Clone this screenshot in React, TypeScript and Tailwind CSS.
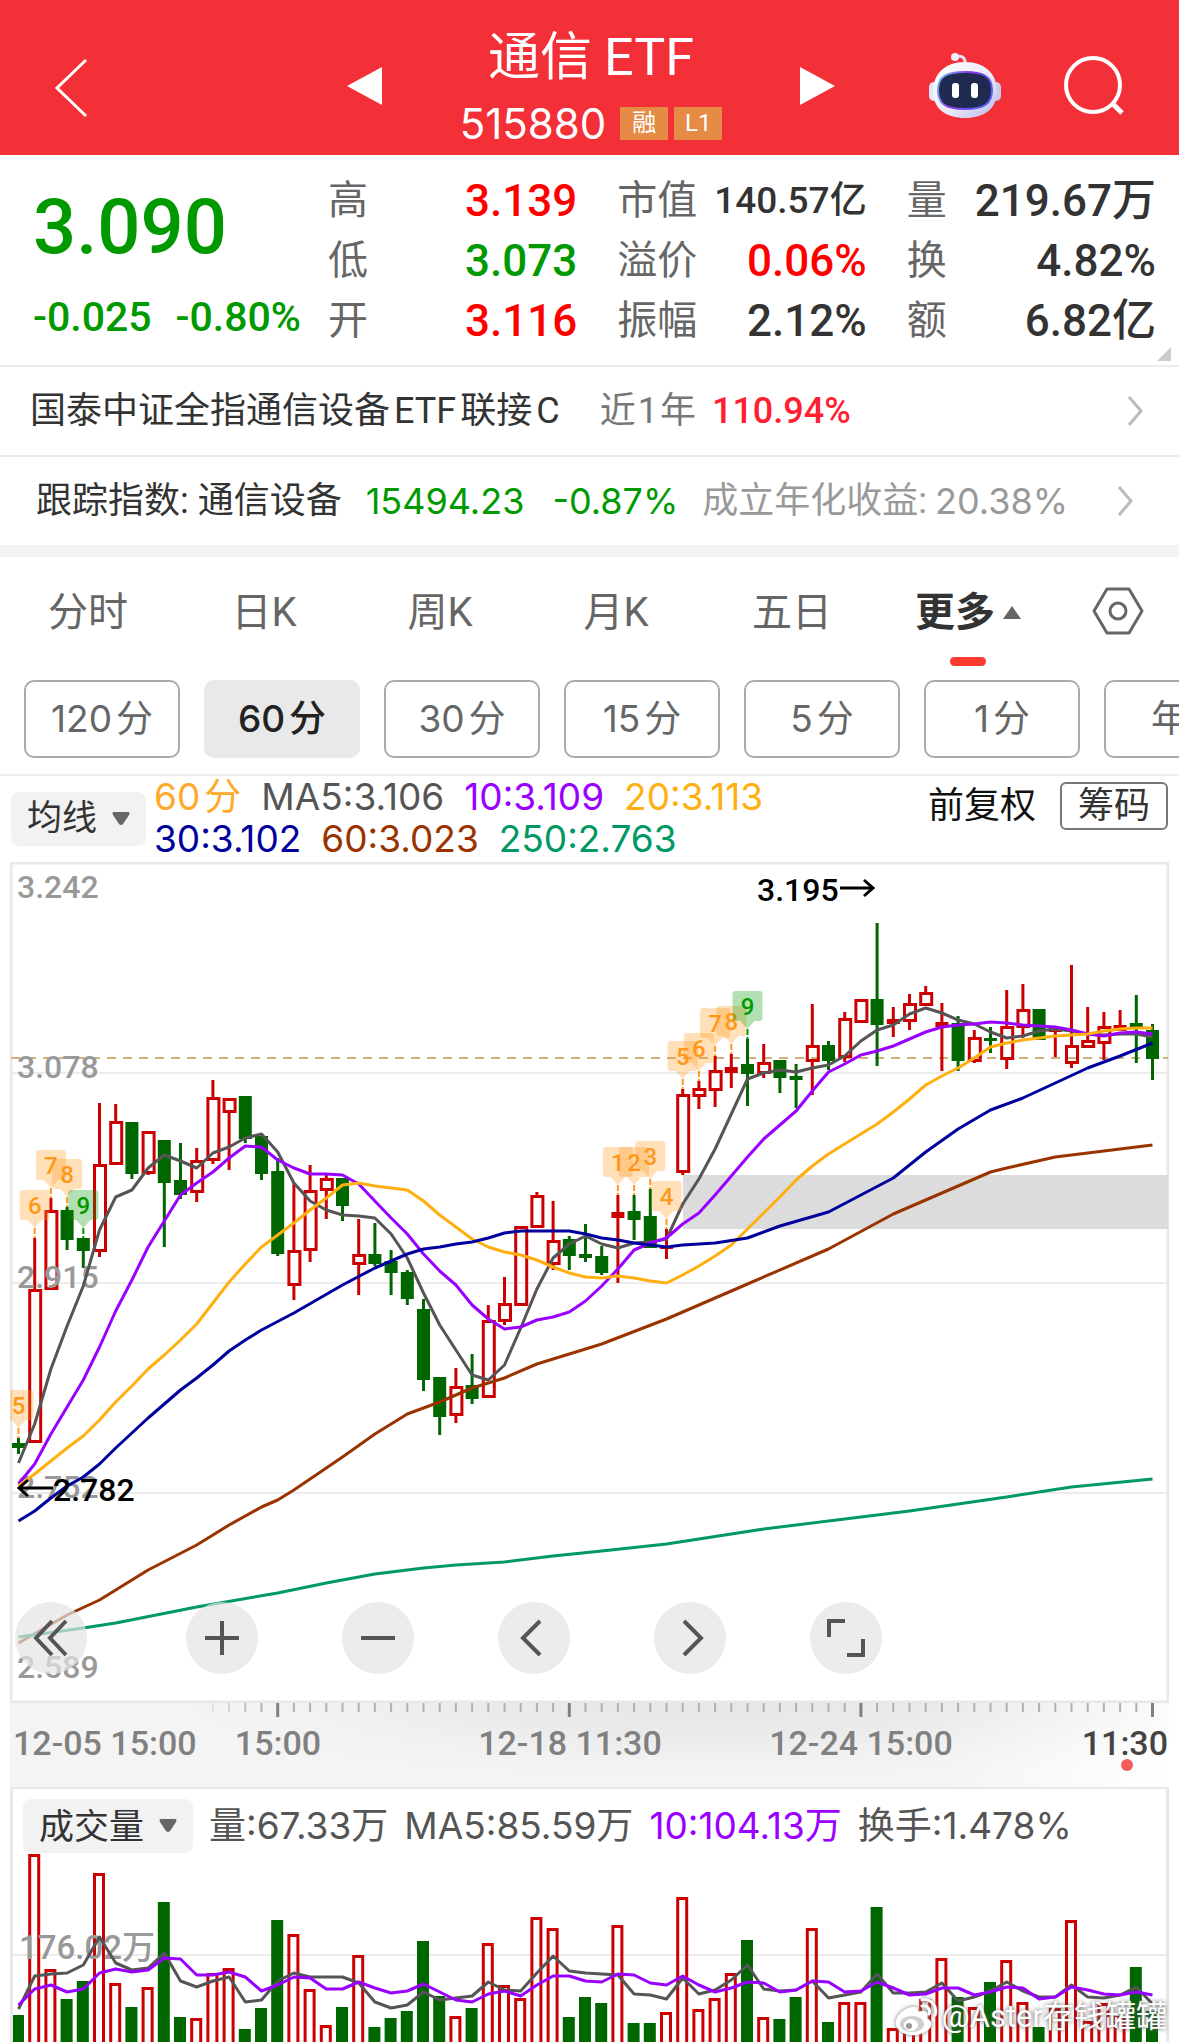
import { useState } from 'react';

type Candle = ['u' | 'd', number, number, number, number];
type Point = [number, number];

const STEP = 16.2;
const xAt = (i: number) => 18.5 + i * STEP;

// direction, high, body top, body bottom, low
const candles: Candle[] = [
  ['d', 1437, 1442, 1447, 1453], ['u', 1237, 1288, 1442, 1442], ['u', 1197, 1209, 1289, 1289],
  ['d', 1206, 1209, 1239, 1249], ['d', 1237, 1237, 1250, 1267], ['u', 1102, 1163, 1251, 1256],
  ['u', 1103, 1120, 1164, 1164], ['d', 1121, 1121, 1173, 1178], ['u', 1130, 1130, 1173, 1174],
  ['d', 1139, 1139, 1182, 1246], ['d', 1142, 1179, 1194, 1198], ['u', 1147, 1159, 1192, 1201],
  ['u', 1079, 1096, 1160, 1163], ['u', 1097, 1097, 1112, 1169], ['d', 1095, 1095, 1138, 1142],
  ['d', 1135, 1135, 1173, 1179], ['d', 1157, 1170, 1253, 1255], ['u', 1182, 1249, 1285, 1299],
  ['u', 1164, 1189, 1250, 1261], ['u', 1174, 1177, 1190, 1218], ['d', 1177, 1177, 1205, 1220],
  ['u', 1218, 1253, 1264, 1294], ['d', 1222, 1253, 1263, 1265], ['d', 1249, 1260, 1272, 1294],
  ['d', 1269, 1271, 1298, 1304], ['d', 1298, 1308, 1379, 1390], ['d', 1376, 1376, 1416, 1434],
  ['u', 1367, 1385, 1415, 1422], ['d', 1353, 1384, 1398, 1403], ['u', 1304, 1319, 1397, 1397],
  ['u', 1276, 1302, 1321, 1324], ['u', 1225, 1225, 1305, 1305], ['u', 1191, 1194, 1227, 1227],
  ['u', 1200, 1239, 1264, 1269], ['d', 1235, 1238, 1255, 1269], ['d', 1223, 1253, 1257, 1261],
  ['d', 1245, 1255, 1272, 1274], ['u', 1194, 1211, 1217, 1282], ['d', 1194, 1210, 1219, 1239],
  ['d', 1188, 1215, 1247, 1247], ['u', 1228, 1246, 1248, 1258], ['u', 1088, 1093, 1172, 1174],
  ['u', 1080, 1087, 1096, 1108], ['u', 1055, 1069, 1090, 1106], ['u', 1053, 1066, 1072, 1087],
  ['d', 1038, 1063, 1073, 1105], ['u', 1043, 1061, 1073, 1077], ['d', 1059, 1059, 1077, 1092],
  ['d', 1063, 1075, 1079, 1107], ['u', 1003, 1044, 1061, 1094], ['d', 1040, 1044, 1060, 1069],
  ['u', 1011, 1017, 1057, 1061], ['u', 998, 998, 1022, 1022], ['d', 922, 998, 1024, 1065],
  ['u', 1006, 1018, 1023, 1036], ['u', 993, 1002, 1021, 1029], ['u', 985, 991, 1005, 1005],
  ['u', 1002, 1021, 1026, 1070], ['d', 1015, 1022, 1060, 1070], ['u', 1029, 1036, 1061, 1062],
  ['d', 1026, 1037, 1040, 1052], ['u', 989, 1025, 1059, 1068], ['u', 983, 1008, 1027, 1037],
  ['d', 1008, 1008, 1039, 1039], ['u', 1025, 1027, 1031, 1056], ['u', 964, 1044, 1063, 1067],
  ['u', 1006, 1039, 1047, 1047], ['u', 1011, 1025, 1043, 1059], ['u', 1009, 1024, 1030, 1030],
  ['d', 994, 1022, 1027, 1062], ['d', 1023, 1029, 1058, 1079],
];

const ma5 = [
  1462, 1423, 1368, 1325, 1285, 1229, 1196, 1189, 1167, 1154, 1160, 1167, 1152, 1146, 1137, 1133, 1151, 1182,
  1200, 1209, 1214, 1215, 1217, 1233, 1257, 1292, 1324, 1349, 1374, 1379, 1364, 1327, 1288, 1257, 1243, 1235,
  1243, 1247, 1242, 1241, 1238, 1203, 1178, 1148, 1113, 1078, 1072, 1069, 1071, 1067, 1064, 1055, 1040, 1029,
  1024, 1013, 1007, 1012, 1019, 1023, 1031, 1037, 1035, 1030, 1028, 1030, 1033, 1034, 1033, 1033, 1036,
];
const ma10 = [
  1483, 1463, 1433, 1406, 1379, 1346, 1310, 1279, 1246, 1220, 1194, 1182, 1171, 1157, 1145, 1146, 1159, 1167,
  1173, 1173, 1174, 1183, 1200, 1217, 1233, 1253, 1270, 1284, 1304, 1318, 1328, 1326, 1319, 1316, 1311, 1300,
  1285, 1268, 1249, 1242, 1237, 1223, 1212, 1194, 1175, 1156, 1138, 1124, 1110, 1090, 1071, 1063, 1054, 1050,
  1045, 1038, 1031, 1026, 1024, 1023, 1021, 1022, 1024, 1025, 1026, 1029, 1033, 1035, 1032, 1031, 1033,
];
const ma20 = [
  1485, 1473, 1460, 1447, 1435, 1419, 1401, 1385, 1368, 1354, 1339, 1323, 1302, 1281, 1263, 1246, 1234, 1222,
  1209, 1197, 1184, 1182, 1185, 1187, 1189, 1200, 1214, 1226, 1238, 1246, 1251, 1254, 1259, 1266, 1272, 1276,
  1277, 1275, 1277, 1280, 1282, 1274, 1265, 1255, 1244, 1228, 1212, 1196, 1179, 1165, 1153, 1143, 1133, 1123,
  1111, 1098, 1084, 1075, 1067, 1057, 1046, 1042, 1039, 1037, 1035, 1034, 1033, 1030, 1028, 1027, 1027,
];
// slower averages are kept as [bar index, y]
const ma30: Point[] = [
  [0, 1520], [1, 1510], [2, 1497], [3, 1485], [4, 1476], [5, 1463], [6, 1447], [7, 1432], [8, 1417], [9, 1403],
  [10, 1389], [11, 1377], [12, 1364], [13, 1350], [14, 1339], [15, 1329], [17, 1312], [20, 1284], [22, 1267],
  [24, 1253], [25, 1248], [26, 1246], [27, 1243], [28, 1241], [29, 1237], [30, 1232], [31, 1230], [34, 1230],
  [35, 1233], [36, 1237], [37, 1239], [38, 1242], [39, 1244], [40, 1246], [41, 1244], [43, 1242], [45, 1237],
  [47, 1225], [50, 1211], [52, 1194], [54, 1177], [55, 1164], [56, 1151], [58, 1128], [60, 1109], [62, 1097],
  [64, 1082], [66, 1067], [68, 1055], [70, 1042],
];
const ma60: Point[] = [
  [0, 1642], [3, 1614], [5, 1599], [8, 1569], [11, 1544], [13, 1524], [15, 1506], [16, 1499], [17, 1489],
  [20, 1456], [22, 1433], [24, 1413], [26, 1401], [28, 1387], [30, 1377], [32, 1363], [34, 1353], [36, 1343],
  [40, 1318], [45, 1283], [50, 1248], [54, 1213], [57, 1192], [60, 1171], [61, 1167], [64, 1156], [66, 1152],
  [70, 1144],
];
const ma250: Point[] = [
  [0, 1636], [4, 1627], [6, 1622], [11, 1606], [16, 1592], [19, 1582], [22, 1573], [25, 1567], [27, 1564],
  [30, 1561], [33, 1555], [36, 1550], [40, 1543], [46, 1528], [55, 1510], [61, 1496], [65, 1486], [70, 1478],
];

const volumeTops = [
  2014, 1853, 1968, 1998, 1980, 1872, 1982, 2006, 1986, 1901, 2016, 2017, 1972, 1967, 2028, 2007, 1919, 1933,
  1988, 2024, 2006, 1954, 2026, 2017, 2010, 1940, 1995, 2015, 2007, 1942, 1984, 1997, 1916, 1927, 2016, 1996,
  2002, 1924, 2022, 2022, 2011, 1896, 2008, 1997, 1972, 1939, 2016, 2018, 1996, 1927, 2021, 2001, 2001, 1906,
  2027, 2020, 1998, 1957, 1996, 2006, 1981, 1959, 2001, 2026, 2007, 1919, 2020, 2002, 2015, 1966, 2010,
];
const volumeMa5 = [
  2008, 1975, 1973, 1972, 1964, 1936, 1962, 1969, 1967, 1952, 1980, 1986, 1980, 1976, 2001, 1999, 1980, 1972,
  1976, 1976, 1976, 1982, 2001, 2007, 2004, 1991, 1999, 1997, 1995, 1981, 1989, 1990, 1972, 1955, 1970, 1972,
  1973, 1974, 1993, 1994, 1998, 1977, 1993, 1989, 1979, 1964, 1988, 1990, 1989, 1980, 1997, 1994, 1991, 1973,
  1992, 1992, 1991, 1982, 2000, 1996, 1990, 1981, 1990, 1996, 1996, 1984, 1996, 1997, 1994, 1986, 2003,
];
const volumeMa10 = [
  2004, 1988, 1984, 1991, 1988, 1972, 1968, 1971, 1969, 1957, 1958, 1974, 1974, 1971, 1976, 1990, 1984, 1976,
  1977, 1988, 1988, 1981, 1987, 1992, 1990, 1983, 1991, 1999, 2001, 1993, 1990, 1995, 1984, 1975, 1975, 1980,
  1981, 1973, 1974, 1982, 1984, 1975, 1984, 1991, 1987, 1981, 1982, 1991, 1989, 1980, 1981, 1991, 1990, 1981,
  1987, 1994, 1993, 1987, 1987, 1994, 1991, 1986, 1987, 1998, 1996, 1986, 1989, 1993, 1994, 1991, 1994,
];

// nine-turn counters: [bar index, count]
const markers: Point[] = [
  [0, 5], [1, 6], [2, 7], [3, 8], [4, 9],
  [37, 1], [38, 2], [39, 3], [40, 4], [41, 5], [42, 6], [43, 7], [44, 8], [45, 9],
];

const quotes = [
  [
    { label: '高', value: '3.139', tone: 'text-[44px] text-[#ff0000]' },
    { label: '低', value: '3.073', tone: 'text-[44px] text-[#009900]' },
    { label: '开', value: '3.116', tone: 'text-[44px] text-[#ff0000]' },
  ],
  [
    { label: '市值', value: '140.57亿', tone: 'text-[37px] text-[#333333]' },
    { label: '溢价', value: '0.06%', tone: 'text-[44px] text-[#ff0000]' },
    { label: '振幅', value: '2.12%', tone: 'text-[44px] text-[#333333]' },
  ],
  [
    { label: '量', value: '219.67万', tone: 'text-[44px] text-[#333333]' },
    { label: '换', value: '4.82%', tone: 'text-[44px] text-[#333333]' },
    { label: '额', value: '6.82亿', tone: 'text-[44px] text-[#333333]' },
  ],
];

const tabs = ['分时', '日K', '周K', '月K', '五日'];
const periods = ['120分', '60分', '30分', '15分', '5分', '1分', '年K'];

const line = (ys: number[]) => ys.map((y, i) => `${xAt(i)},${y}`).join(' ');
const sparse = (pts: Point[]) => pts.map(([i, y]) => `${xAt(i)},${y}`).join(' ');

const Chevron = () => (
  <svg viewBox="0 0 16 32" className="ml-auto h-8 w-4" fill="none" stroke="#bbbbbb" strokeWidth="3">
    <path d="M2 2 L14 16 L2 30" />
  </svg>
);

const Header = () => (
  <header className="grid h-[155px] grid-cols-[347fr_488px_344fr] items-center bg-[#f33038] text-white">
    <button aria-label="返回" className="ml-[54px] mt-5 w-9">
      <svg viewBox="0 0 36 60" fill="none" stroke="#fff" strokeWidth="3">
        <path d="M32 2 L3 30 L32 58" />
      </svg>
    </button>
    <div className="flex items-center justify-between">
      <button aria-label="上一只" className="mt-4">
        <svg width="35" height="38" viewBox="0 0 35 38" fill="#fff">
          <path d="M35 0 V38 L0 19 Z" />
        </svg>
      </button>
      <div className="flex flex-col items-center pt-5">
        <h1 className="flex gap-3 text-[52px] leading-[72px]">
          <span>通信</span>
          <span>ETF</span>
        </h1>
        <div className="flex items-center gap-[6px]">
          <span className="mr-2 font-[Inter,sans-serif] text-[42px] leading-[60px]">515880</span>
          <span className="h-[33px] w-12 bg-[#e58b46] text-center text-[24px] leading-[33px]">融</span>
          <span className="h-[33px] w-12 bg-[#e58b46] text-center text-[24px] leading-[33px]">L1</span>
        </div>
      </div>
      <button aria-label="下一只" className="mt-4">
        <svg width="35" height="38" viewBox="0 0 35 38" fill="#fff">
          <path d="M0 0 V38 L35 19 Z" />
        </svg>
      </button>
    </div>
    <div className="flex items-center justify-end gap-[62px] pr-[55px] pt-4">
      <button aria-label="智能助手">
        <svg width="74" height="68" viewBox="0 0 74 68">
          <defs>
            <linearGradient id="shell" x1="0" y1="0" x2="1" y2="1">
              <stop offset="0" stopColor="#ffffff" />
              <stop offset="0.55" stopColor="#eceafa" />
              <stop offset="1" stopColor="#b9b8e6" />
            </linearGradient>
            <linearGradient id="rim" x1="0" y1="0" x2="1" y2="0.4">
              <stop offset="0" stopColor="#5fd0f5" />
              <stop offset="0.5" stopColor="#8a35e8" />
              <stop offset="1" stopColor="#5a5df0" />
            </linearGradient>
          </defs>
          <path d="M37 13 C38 5 33 3 28 5" fill="none" stroke="#dedcf5" strokeWidth="3" />
          <circle cx="27" cy="5" r="4" fill="#f1effc" />
          <rect x="1" y="30" width="10" height="19" rx="5" fill="#e6e4f8" />
          <rect x="63" y="30" width="10" height="19" rx="5" fill="#c9c8ee" />
          <path d="M37 10 C58 10 69 23 69 39 C69 57 56 66 37 66 C18 66 5 57 5 39 C5 23 16 10 37 10 Z" fill="url(#shell)" />
          <path d="M37 20 C55 20 64 24 64 38 C64 52 56 57 37 57 C18 57 10 52 10 38 C10 24 19 20 37 20 Z" fill="#1f2a50" stroke="url(#rim)" strokeWidth="2" />
          <rect x="24" y="31" width="7" height="15" rx="3" fill="#fff" />
          <rect x="43" y="31" width="7" height="15" rx="3" fill="#fff" />
        </svg>
      </button>
      <button aria-label="搜索">
        <svg width="60" height="60" viewBox="0 0 60 60" fill="none" stroke="#fff" strokeWidth="4">
          <circle cx="29" cy="29" r="27" />
          <path d="M48 47 L58 57" strokeWidth="5" />
        </svg>
      </button>
    </div>
  </header>
);

const Quote = () => (
  <section className="relative flex border-b-2 border-[#ececec] pl-[33px] pr-[23px] pt-4 pb-[14px]">
    <div className="w-[295px] shrink-0 font-medium text-[#009900]">
      <div className="pt-3 text-[76px] leading-[88px]">3.090</div>
      <div className="flex gap-6 pt-4 text-[41px] leading-[60px]">
        <span>-0.025</span>
        <span>-0.80%</span>
      </div>
    </div>
    <div className="grid flex-1 grid-cols-3 gap-10">
      {quotes.map((column) => (
        <dl key={column[0].label}>
          {column.map(({ label, value, tone }) => (
            <div key={label} className="flex h-[60px] items-center justify-between">
              <dt className="text-[40px] text-[#666666]">{label}</dt>
              <dd className={`font-medium ${tone}`}>{value}</dd>
            </div>
          ))}
        </dl>
      ))}
    </div>
    <svg className="absolute right-2 bottom-1 size-[14px]" viewBox="0 0 14 14" fill="#cccccc">
      <path d="M14 0 V14 H0 Z" />
    </svg>
  </section>
);

const Links = () => (
  <>
    <a href="#fund" className="flex h-[90px] items-center border-b-2 border-[#ececec] pl-[30px] pr-9 text-[36px] text-[#333333]">
      <span className="flex gap-1">
        <span>国泰中证全指通信设备</span>
        <span>ETF</span>
        <span>联接</span>
        <span>C</span>
      </span>
      <span className="ml-10 flex gap-[2px] text-[#777777]">
        <span>近</span>
        <span>1</span>
        <span>年</span>
      </span>
      <span className="ml-4 font-medium text-[#ff1e32]">110.94%</span>
      <Chevron />
    </a>
    <a href="#index" className="flex h-[88px] items-center pl-9 pr-[46px] text-[36px] text-[#333333]">
      <span>跟踪指数: 通信设备</span>
      <span className="ml-6 font-[Inter,sans-serif] text-[#009900]">15494.23</span>
      <span className="ml-7 font-[Inter,sans-serif] text-[#009900]">-0.87%</span>
      <span className="ml-6 text-[#999999]">成立年化收益:</span>
      <span className="ml-2 font-[Inter,sans-serif] text-[#999999]">20.38%</span>
      <Chevron />
    </a>
    <div className="h-3 bg-[#f4f4f4]" />
  </>
);

const PeriodTabs = () => {
  const [period, setPeriod] = useState('60分');

  return (
    <nav className="overflow-hidden border-b-2 border-[#ececec]">
      <div className="grid h-[123px] grid-cols-[repeat(6,176fr)_123fr] text-[40px] text-[#666666]">
        {tabs.map((tab) => (
          <button key={tab} className="pb-3">
            {tab}
          </button>
        ))}
        <button className="relative flex items-center justify-center gap-2 pb-3 font-bold text-[#333333]">
          更多
          <svg width="18" height="13" viewBox="0 0 18 13" fill="#666666">
            <path d="M9 0 L18 13 H0 Z" />
          </svg>
          <span className="absolute bottom-[14px] left-1/2 h-[9px] w-9 -translate-x-1/2 rounded-full bg-[#fd3a30]" />
        </button>
        <button aria-label="设置" className="flex items-center justify-center pb-4">
          <svg width="52" height="48" viewBox="0 0 52 48" fill="none" stroke="#666666" strokeWidth="3">
            <path d="M15 2 H37 L50 24 L37 46 H15 L2 24 Z" strokeLinejoin="round" />
            <circle cx="26" cy="24" r="8" />
          </svg>
        </button>
      </div>
      <div className="flex gap-6 pb-4 pl-6">
        {periods.map((p) => (
          <button
            key={p}
            onClick={() => setPeriod(p)}
            className={`flex h-[78px] w-[156px] shrink-0 items-center justify-center gap-1 rounded-[10px] border-2 font-[Inter,'Noto_Sans_CJK_SC',sans-serif] text-[37px] ${
              p === period
                ? 'border-[#e9e9e9] bg-[#e9e9e9] font-medium text-[#222222]'
                : 'border-[#aaaaaa] text-[#666666]'
            }`}
          >
            {p.endsWith('分') ? (
              <>
                <span>{p.slice(0, -1)}</span>
                <span>分</span>
              </>
            ) : (
              p
            )}
          </button>
        ))}
      </div>
    </nav>
  );
};

const Picker = ({ label, options }: { label: string; options: string[] }) => (
  <label className="flex h-[54px] shrink-0 items-center gap-[14px] rounded-lg bg-[#f2f2f2] px-4">
    <select aria-label={label} className="appearance-none bg-transparent text-[35px] leading-[54px] text-[#333333] outline-none">
      {options.map((o) => (
        <option key={o}>{o}</option>
      ))}
    </select>
    <svg width="18" height="14" viewBox="0 0 18 14" fill="#666666">
      <path d="M1 0 H17 Q18 1 17 3 L11 12 Q9 14 7 12 L1 3 Q0 1 1 0 Z" />
    </svg>
  </label>
);

const Indicators = () => (
  <div className="flex h-[86px] items-start px-[11px]">
    <div className="pt-4">
      <Picker label="指标" options={['均线']} />
    </div>
    <div className="ml-2 flex-1 font-[Inter,'Noto_Sans_CJK_SC',sans-serif] text-[37px] leading-[42px]">
      <div className="flex gap-5">
        <span className="flex gap-1 text-[#ffa92b]">
          <span>60</span>
          <span>分</span>
        </span>
        <span className="text-[#555555]">MA5:3.106</span>
        <span className="text-[#9a00ff]">10:3.109</span>
        <span className="text-[#ffb010]">20:3.113</span>
      </div>
      <div className="flex gap-5">
        <span className="text-[#00009c]">30:3.102</span>
        <span className="text-[#993300]">60:3.023</span>
        <span className="text-[#009966]">250:2.763</span>
      </div>
    </div>
    <button className="mt-[6px] text-[36px] leading-[48px] text-[#111111]">前复权</button>
    <button className="ml-6 mt-[6px] h-12 w-[108px] rounded-md border-2 border-[#777777] text-[36px] leading-[42px] text-[#333333]">
      筹码
    </button>
  </div>
);

const CandleShape = ({ candle, x }: { candle: Candle; x: number }) => {
  const [dir, high, top, bottom, low] = candle;
  const color = dir === 'u' ? '#cc0000' : '#006600';
  const hollow = dir === 'u' && bottom - top > 7;

  return (
    <g stroke={color} strokeWidth="3">
      <path d={`M${x} ${high} V${top} M${x} ${bottom} V${low}`} />
      {hollow ? (
        <rect x={x - 5} y={top + 1.5} width="11" height={bottom - top - 3} fill="none" />
      ) : (
        <rect x={x - 6.5} y={top} width="13" height={bottom - top} fill={color} stroke="none" />
      )}
    </g>
  );
};

const Marker = ({ index, count }: { index: number; count: number }) => {
  const x = xAt(index);
  const high = candles[index][1];
  const top = high - 48;
  const color = count === 9 ? '#009900' : '#ff9818';

  return (
    <g>
      <path
        d={`M${x - 12} ${top} H${x + 12} Q${x + 15} ${top} ${x + 15} ${top + 3} V${top + 27} Q${x + 15} ${top + 30} ${x + 12} ${top + 30} H${x + 7} L${x} ${top + 38} L${x - 7} ${top + 30} H${x - 12} Q${x - 15} ${top + 30} ${x - 15} ${top + 27} V${top + 3} Q${x - 15} ${top} ${x - 12} ${top} Z`}
        fill={color}
        fillOpacity="0.3"
      />
      <path d={`M${x} ${top + 38} V${high}`} stroke={color} strokeWidth="2" strokeDasharray="6 2" />
      <text x={x} y={top + 24} textAnchor="middle" fontSize="24" fontWeight="500" fill={color}>
        {count}
      </text>
    </g>
  );
};

const tools = [
  { name: '展开', d: 'M20 2 L4 19 L20 36 M34 2 L18 19 L34 36' },
  { name: '放大', d: 'M2 19 H36 M19 2 V36' },
  { name: '缩小', d: 'M2 19 H36' },
  { name: '左移', d: 'M25 2 L8 19 L25 36' },
  { name: '右移', d: 'M13 2 L30 19 L13 36' },
  { name: '全屏', d: 'M2 18 V2 H18 M36 20 V36 H20' },
];

const PriceChart = () => (
  <div className="relative mx-[10px]">
    <svg viewBox="10 861 1159 841" className="block w-full" fill="none">
      <rect x="11" y="862" width="1157" height="839" stroke="#e8e8e8" strokeWidth="3" />
      <path d="M12 1072 H1167 M12 1282 H1167 M12 1492 H1167" stroke="#ececec" strokeWidth="2" />
      <rect x="683" y="1174" width="485" height="54" fill="#dcdcdc" />
      <path d="M11 1057 H1168" stroke="#d2b27c" strokeWidth="2" strokeDasharray="9 7" />
      {candles.map((c, i) => (
        <CandleShape key={i} candle={c} x={xAt(i)} />
      ))}
      <g fill="#999999" fontSize="32" fontWeight="500">
        <text x="17" y="897">3.242</text>
        <text x="17" y="1077">3.078</text>
        <text x="17" y="1287">2.915</text>
        <text x="17" y="1497">2.752</text>
        <text x="17" y="1677">2.589</text>
      </g>
      <g strokeWidth="3" strokeLinejoin="round">
        <polyline points={line(ma5)} stroke="#555555" />
        <polyline points={line(ma10)} stroke="#9a00ff" />
        <polyline points={line(ma20)} stroke="#ffb010" />
        <polyline points={sparse(ma30)} stroke="#00009c" />
        <polyline points={sparse(ma60)} stroke="#993300" />
        <polyline points={sparse(ma250)} stroke="#009966" />
      </g>
      {markers.map(([index, count]) => (
        <Marker key={index} index={index} count={count} />
      ))}
      <g fill="#000000" fontSize="32" fontWeight="500">
        <text x="757" y="900">3.195</text>
        <text x="53" y="1500">2.782</text>
      </g>
      <g stroke="#000000" strokeWidth="3">
        <path d="M840 887 H872 M864 879 L873 887 L864 895" />
        <path d="M20 1487 H53 M28 1479 L19 1487 L28 1495" />
      </g>
    </svg>
    <div className="absolute bottom-[29px] left-[5px] flex gap-[84px]">
      {tools.map(({ name, d }, i) => (
        <button
          key={name}
          aria-label={name}
          className={`flex size-[72px] items-center justify-center rounded-full bg-[#e4e4e4]/70 ${i === 0 ? 'mr-[15px]' : ''}`}
        >
          <svg width="38" height="38" viewBox="0 0 38 38" fill="none" stroke="#555555" strokeWidth="4">
            <path d={d} />
          </svg>
        </button>
      ))}
    </div>
  </div>
);

const TimeAxis = () => (
  <div className="mx-[10px]">
    <svg viewBox="10 1702 1159 84" className="block w-full" fontSize="34" fontWeight="500" fill="#808080">
      <defs>
        <linearGradient id="fade" x1="0" x2="1">
          <stop offset="0.8" stopColor="#f4f4f4" />
          <stop offset="1" stopColor="#ffffff" />
        </linearGradient>
        <radialGradient id="shade" cx="0.6" cy="0" r="0.5" gradientTransform="scale(1 2)">
          <stop offset="0" stopColor="#e6e6e6" />
          <stop offset="0.4" stopColor="#e8e8e8" stopOpacity="0.8" />
          <stop offset="1" stopColor="#f4f4f4" stopOpacity="0" />
        </radialGradient>
      </defs>
      <rect x="10" y="1702" width="1159" height="84" fill="url(#fade)" />
      <rect x="10" y="1702" width="1159" height="84" fill="url(#shade)" />
      {Array.from({ length: 59 }, (_, n) => {
        const i = n + 12;
        const major = (70 - i) % 18 === 0;
        return (
          <path
            key={i}
            d={`M${xAt(i)} 1702 V${major ? 1716 : 1711}`}
            stroke={major ? '#808080' : '#b0b0b0'}
            strokeWidth={major ? 3 : 2}
            opacity={Math.min(1, (n + 1) / 4)}
          />
        );
      })}
      <text x="13" y="1754">12-05 15:00</text>
      <text x="278" y="1754" textAnchor="middle">15:00</text>
      <text x="570" y="1754" textAnchor="middle">12-18 11:30</text>
      <text x="861" y="1754" textAnchor="middle">12-24 15:00</text>
      <text x="1168" y="1754" textAnchor="end" fill="#444444">11:30</text>
      <circle cx="1127" cy="1764" r="6" fill="#f45c5c" />
    </svg>
  </div>
);

const VolumeChart = () => (
  <section className="mx-[10px] border-x-3 border-t-2 border-[#e8e8e8]">
    <div className="flex h-16 items-end gap-4 pl-[10px] font-[Inter,'Noto_Sans_CJK_SC',sans-serif] text-[37px] leading-[54px] text-[#555555]">
      <Picker label="副图指标" options={['成交量']} />
      <span>量:67.33万</span>
      <span>MA5:85.59万</span>
      <span className="text-[#9a00ff]">10:104.13万</span>
      <span>换手:1.478%</span>
    </div>
    <svg viewBox="13 1852 1153 190" className="block w-full" fill="none">
      <path d="M12 1954 H1168" stroke="#ececec" strokeWidth="2" />
      {volumeTops.map((top, i) =>
        candles[i][0] === 'u' ? (
          <rect key={i} x={xAt(i) - 5} y={top + 1.5} width="9" height="200" stroke="#cc0000" strokeWidth="3" />
        ) : (
          <rect key={i} x={xAt(i) - 6.5} y={top} width="12" height="200" fill="#006600" />
        ),
      )}
      <text x="19" y="1958" fontSize="33" fontWeight="500" fill="#999999">
        176.02万
      </text>
      <g strokeWidth="3" strokeLinejoin="round">
        <polyline points={line(volumeMa5)} stroke="#555555" />
        <polyline points={line(volumeMa10)} stroke="#9a00ff" />
      </g>
    </svg>
  </section>
);

const Watermark = () => (
  <div className="absolute right-3 bottom-1 flex items-center gap-1 text-[31px] leading-[44px] text-white [text-shadow:0_0_4px_#555555]">
    <svg width="44" height="40" viewBox="0 0 44 40" className="drop-shadow-[0_0_2px_#777777]" fill="none">
      <path d="M17 10 C8 12 0 21 2 28 C4 36 14 39 23 38 C33 36 39 30 37 25 C36 22 33 22 33 21 C36 12 26 14 24 15 C25 10 22 9 17 10 Z" fill="#fff" />
      <ellipse cx="18" cy="27" rx="12" ry="8" fill="#cfcfcf" />
      <ellipse cx="17" cy="28" rx="7" ry="6" fill="#fff" />
      <circle cx="15" cy="29" r="3" fill="#999999" />
      <path d="M28 9 C33 8 37 12 35 17 M28 3 C37 1 44 9 41 18" stroke="#fff" strokeWidth="3" strokeLinecap="round" />
    </svg>
    @Aster存钱罐罐
  </div>
);

export default function App() {
  return (
    <main className="relative overflow-hidden bg-white font-[Roboto,'Noto_Sans_CJK_SC',sans-serif]">
      <Header />
      <Quote />
      <Links />
      <PeriodTabs />
      <Indicators />
      <PriceChart />
      <TimeAxis />
      <VolumeChart />
      <Watermark />
    </main>
  );
}
